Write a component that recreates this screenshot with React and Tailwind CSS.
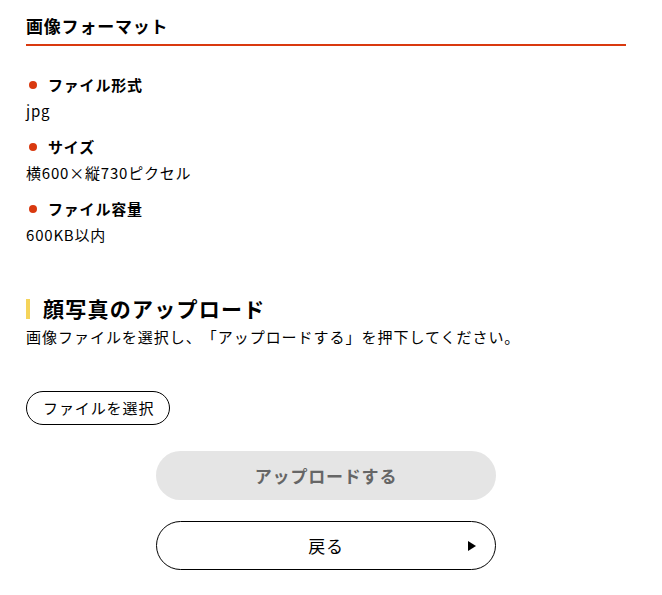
export default function App() {
  const items = [
    { label: "ファイル形式", value: "jpg" },
    { label: "サイズ", value: "横600×縦730ピクセル" },
    { label: "ファイル容量", value: "600KB以内" },
  ];
  return (
    <div className="w-[662px] bg-white text-black tracking-[0.05em] [text-spacing-trim:space-all]" style={{ fontFamily: '"Noto Sans CJK JP", "Noto Sans", sans-serif' }}>
      <div className="px-[26px] pt-[13px] w-[652px]">
        <h2 className="text-[17px] font-bold leading-[26px] pb-[5px] border-b-2 border-[#d9390f]">画像フォーマット</h2>
        <div className="mt-[26px] flex flex-col gap-[10px]">
          {items.map((it) => (
            <div key={it.label}>
              <div className="flex items-center h-[26px]">
                <span className="w-[8px] h-[8px] rounded-full bg-[#d9390f] ml-[3px] mr-[11px]" />
                <span className="text-[15px] font-bold">{it.label}</span>
              </div>
              <div className="text-[15px] leading-[26px]">{it.value}</div>
            </div>
          ))}
        </div>
        <div className="mt-[48px] flex items-center h-[26px]">
          <span className="w-[4px] h-[20px] bg-[#f5d45a] mr-[13px]" />
          <span className="text-[21px] font-bold tracking-[0.06em]">顔写真のアップロード</span>
        </div>
        <p className="text-[15px] leading-[26px] mt-[2px] tracking-[0.065em]">画像ファイルを選択し、「アップロードする」を押下してください。</p>
        <button className="mt-[41px] h-[34px] pl-[16px] pr-[15px] rounded-full border border-black text-[15px] bg-white tracking-[0.06em]">ファイルを選択</button>
        <div className="flex flex-col items-center mt-[26px] gap-[21px]">
          <div className="w-[340px] h-[49px] rounded-full bg-[#e5e5e5] flex items-center justify-center text-[17px] font-bold text-[#666]">アップロードする</div>
          <div className="relative w-[340px] h-[49px] rounded-full border border-black flex items-center justify-center text-[17px]">
            戻る
            <svg className="absolute right-[19px]" width="8" height="10" viewBox="0 0 8 10"><path d="M0 0 L8 5 L0 10 Z" fill="#000" /></svg>
          </div>
        </div>
      </div>
    </div>
  );
}
